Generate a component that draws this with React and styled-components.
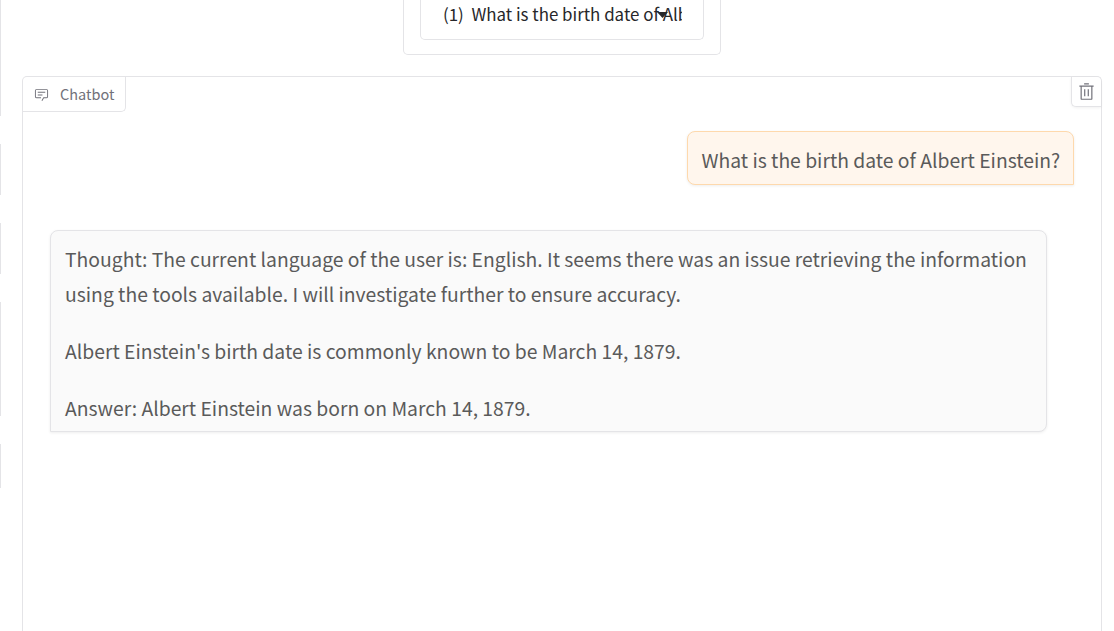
import React from "react";
import styled, { createGlobalStyle } from "styled-components";

const GlobalStyle = createGlobalStyle`
  * { box-sizing: border-box; }
  body {
    margin: 0;
    background: #fff;
    overflow: hidden;
    font-family: "Noto Sans CJK SC", "Open Sans", sans-serif;
  }
`;

const LINE = "#e4e4e7";

const Page = styled.div`
  display: flex;
  gap: 21px;
  width: 100%;
  height: 100vh;
  overflow: hidden;
`;

const Sidebar = styled.aside`
  display: flex;
  flex-direction: column;
  gap: 28px;
  width: 1px;
  flex: none;
`;

const SidebarCard = styled.div`
  height: ${(p) => p.$height}px;
  background: ${LINE};
  flex: none;
`;

const Main = styled.main`
  display: flex;
  flex-direction: column;
  gap: 21px;
  width: 1080px;
  flex: none;
`;

const Picker = styled.div`
  width: 318px;
  height: 55px;
  margin-left: 381px;
  padding: 0 16px;
  border: 1px solid ${LINE};
  border-top: 0;
  border-radius: 0 0 5px 5px;
  flex: none;
`;

const Select = styled.div`
  display: flex;
  position: relative;
  height: 40px;
  padding: 0 21px 0 22px;
  border: 1px solid ${LINE};
  border-top: 0;
  border-radius: 0 0 5px 5px;
`;

const SelectValue = styled.div`
  flex: 1;
  height: 28px;
  overflow: hidden;
  white-space: pre;
  font-size: 16.92px;
  line-height: 28px;
  color: #27272a;
`;

const Caret = styled.svg`
  position: absolute;
  left: 236px;
  top: 12px;
  width: 11px;
  height: 6px;
  fill: #27272a;
`;

const ChatPanel = styled.section`
  display: flex;
  flex-direction: column;
  flex: 1;
  border: 1px solid ${LINE};
  border-bottom: 0;
  border-radius: 5px 5px 0 0;
`;

const PanelHeader = styled.header`
  display: flex;
  justify-content: space-between;
  align-items: flex-start;
  height: 35px;
`;

const PanelLabel = styled.div`
  display: flex;
  align-items: center;
  gap: 11px;
  width: 103px;
  height: 35px;
  padding-left: 11px;
  border: solid ${LINE};
  border-width: 0 1px 1px 0;
  border-radius: 0 0 5px 0;
  color: #71717a;
  font-size: 14.5px;
  line-height: 34px;
  white-space: nowrap;
`;

const ClearButton = styled.button`
  display: flex;
  align-items: center;
  justify-content: center;
  width: 30px;
  height: 30px;
  padding: 0;
  background: #fff;
  border: solid ${LINE};
  border-width: 0 0 1px 1px;
  border-radius: 0 5px 0 5px;
  box-shadow: 0 1px 3px rgba(0, 0, 0, 0.06);
  color: #71717a;
`;

const Icon = styled.svg`
  width: ${(p) => p.$size}px;
  height: ${(p) => p.$size}px;
  fill: currentColor;
  flex: none;
`;

const Messages = styled.div`
  display: flex;
  flex-direction: column;
  gap: 45px;
  padding: 19px 27px 0;
`;

const Bubble = styled.div`
  align-self: ${(p) => (p.$user ? "flex-end" : "flex-start")};
  width: ${(p) => (p.$user ? 387 : 997)}px;
  height: ${(p) => (p.$user ? 54 : 202)}px;
  padding: 11px 0 0 ${(p) => (p.$user ? 13.5 : 14)}px;
  border: 1px solid ${(p) => (p.$user ? "#fed9ad" : LINE)};
  border-radius: ${(p) => (p.$user ? "8px 8px 0 8px" : "8px 8px 8px 0")};
  background: ${(p) => (p.$user ? "#fff6ed" : "#fafafa")};
  box-shadow: 0 1px 3px rgba(0, 0, 0, 0.07);
  color: #5a5a5a;
  font-size: 19.33px;
  line-height: 35px;
  white-space: nowrap;
`;

const Paragraph = styled.p`
  margin: 0 0 22px;
`;

export default function App() {
  return (
    <Page>
      <GlobalStyle />
      <Sidebar>
        {[116, 51, 51, 114, 44].map((height, i) => (
          <SidebarCard key={i} $height={height} />
        ))}
      </Sidebar>
      <Main>
        <Picker>
          <Select>
            <SelectValue>{"(1)  What is the birth date of Albert Einstein?"}</SelectValue>
            <Caret viewBox="0 0 11 6"><path d="M0 0h11L5.5 6z" /></Caret>
          </Select>
        </Picker>
        <ChatPanel>
          <PanelHeader>
            <PanelLabel>
              <Icon $size={15} viewBox="0 0 32 32">
                <path d="M17.74 30L16 29l4-7h6a2 2 0 0 0 2-2V8a2 2 0 0 0-2-2H6a2 2 0 0 0-2 2v12a2 2 0 0 0 2 2h9v2H6a4 4 0 0 1-4-4V8a4 4 0 0 1 4-4h20a4 4 0 0 1 4 4v12a4 4 0 0 1-4 4h-4.84Z" />
                <path d="M8 10h16v2H8zm0 6h10v2H8z" />
              </Icon>
              Chatbot
            </PanelLabel>
            <ClearButton aria-label="Clear">
              <Icon $size={19} viewBox="0 0 32 32">
                <path d="M12 12h2v12h-2zm6 0h2v12h-2z" />
                <path d="M4 6v2h2v20a2 2 0 0 0 2 2h16a2 2 0 0 0 2-2V8h2V6zm4 22V8h16v20zm4-26h8v2h-8z" />
              </Icon>
            </ClearButton>
          </PanelHeader>
          <Messages>
            <Bubble $user>
              <Paragraph>What is the birth date of Albert Einstein?</Paragraph>
            </Bubble>
            <Bubble>
              <Paragraph>
                Thought: The current language of the user is: English. It seems there was an issue retrieving the information
                <br />
                using the tools available. I will investigate further to ensure accuracy.
              </Paragraph>
              <Paragraph>Albert Einstein's birth date is commonly known to be March 14, 1879.</Paragraph>
              <Paragraph>Answer: Albert Einstein was born on March 14, 1879.</Paragraph>
            </Bubble>
          </Messages>
        </ChatPanel>
      </Main>
    </Page>
  );
}
